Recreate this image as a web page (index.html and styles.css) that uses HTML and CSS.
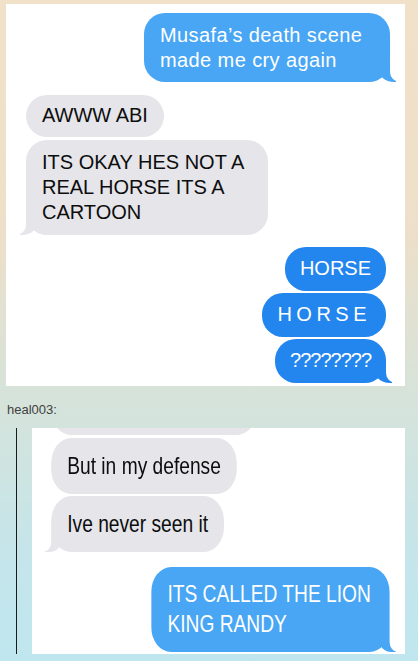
FILE: index.html
```html
<!DOCTYPE html>
<html lang="en">
<head>
    <meta charset="utf-8">
    <title>heal003</title>
    <link rel="stylesheet" href="styles.css">
</head>
<body>
    <div class="page">
        <div class="shot">
            <div class="thread">
                <div class="bubble out soft tail first">Musafa’s death scene made me cry again</div>
                <div class="bubble in abi">AWWW ABI</div>
                <div class="bubble in tail okay">ITS OKAY HES NOT A REAL HORSE ITS A CARTOON</div>
                <div class="bubble out horse gap-big">HORSE</div>
                <div class="bubble out horse spaced">HORSE</div>
                <div class="bubble out horse tail qs">????????</div>
            </div>
        </div>
        <p class="user">heal003:</p>
        <blockquote class="quote">
            <div class="shot squeezed">
                <div class="thread squeeze">
                    <div class="bubble in cut"></div>
                    <div class="bubble in">But in my defense</div>
                    <div class="bubble in tail">Ive never seen it</div>
                    <div class="bubble out soft tail randy">ITS CALLED THE LION KING RANDY</div>
                </div>
            </div>
        </blockquote>
    </div>
</body>
</html>
```

FILE: styles.css
```css
html {
    height: 100%;
    background: linear-gradient(180deg, #f2e1c9 0%, #eddfc9 35%, #d6e3da 60%, #c4e5eb 85%, #bfe6ee 100%);
}
body {
    margin: 0;
    font-family: "Liberation Sans", Arial, sans-serif;
}
.page {
    padding: 4px 13px 0 6px;
}
.shot {
    background-color: #fff;
}
.thread {
    display: flex;
    flex-direction: column;
    padding: 9px 15px 3px 20px;
}

/* bubbles */
.bubble {
    position: relative;
    z-index: 0;
    font-size: 20px;
    line-height: 25px;
    padding: 8px 16px 9px;
    border-radius: 21px;
}
.in {
    align-self: flex-start;
    background-color: #e5e5ea;
    color: #0d0d0d;
}
.out {
    align-self: flex-end;
    background-color: #2386ee;
    color: #fff;
}
.out.soft {
    background-color: #48a6f4;
}
.tail::before,
.tail::after {
    content: "";
    position: absolute;
    bottom: 0;
    z-index: -1;
    height: 20px;
}
.out.tail::before {
    right: -6px;
    width: 18px;
    background: inherit;
    border-bottom-left-radius: 16px 14px;
}
.out.tail::after {
    right: -10px;
    width: 10px;
    background-color: #fff;
    border-bottom-left-radius: 10px;
}
.in.tail::before {
    left: -6px;
    width: 18px;
    background: inherit;
    border-bottom-right-radius: 16px 14px;
}
.in.tail::after {
    left: -10px;
    width: 10px;
    background-color: #fff;
    border-bottom-right-radius: 10px;
}

/* first screenshot */
.first {
    max-width: 246px;
    box-sizing: border-box;
    padding: 10px 16px 9px;
    letter-spacing: 0.4px;
}
.abi {
    margin-top: 13px;
}
.okay {
    margin-top: 3px;
    max-width: 242px;
    box-sizing: border-box;
    padding: 10px 16px;
}
.horse {
    margin-right: 4px;
    margin-top: 2px;
    padding: 9px 15px 10px;
}
.horse.gap-big {
    margin-top: 12px;
}
.spaced {
    letter-spacing: 4.5px;
}
.qs {
    letter-spacing: -1px;
}

/* quoted reply */
.user {
    margin: 16px 0 0 1px;
    font-size: 13px;
    line-height: 16px;
    color: #414141;
}
.quote {
    margin: 10px 0 0 10px;
    padding-left: 15px;
    border-left: 1px solid #1a1a1a;
}
.squeezed {
    overflow: hidden;
}
.squeeze {
    width: 125%;
    box-sizing: border-box;
    padding: 0 19px 2px 24px;
    transform: scaleX(0.8);
    transform-origin: 0 0;
}
.squeeze .bubble {
    font-size: 24px;
    line-height: 30px;
    padding: 13px 20px;
    border-radius: 25px;
    margin-top: 2px;
}
.squeeze .tail::before,
.squeeze .tail::after {
    height: 24px;
}
.squeeze .out.tail::before {
    right: -8px;
    width: 22px;
}
.squeeze .out.tail::after {
    right: -12px;
    width: 12px;
}
.squeeze .in.tail::before {
    left: -8px;
    width: 22px;
}
.squeeze .in.tail::after {
    left: -12px;
    width: 12px;
}
.squeeze .cut {
    width: 257px;
    height: 56px;
    padding: 0;
    margin-top: -49px;
}
.squeeze .cut + .bubble {
    margin-top: 3px;
}
.squeeze .randy {
    margin-top: 15px;
    max-width: 298px;
    box-sizing: border-box;
    padding: 12px 20px 13px;
}
```
